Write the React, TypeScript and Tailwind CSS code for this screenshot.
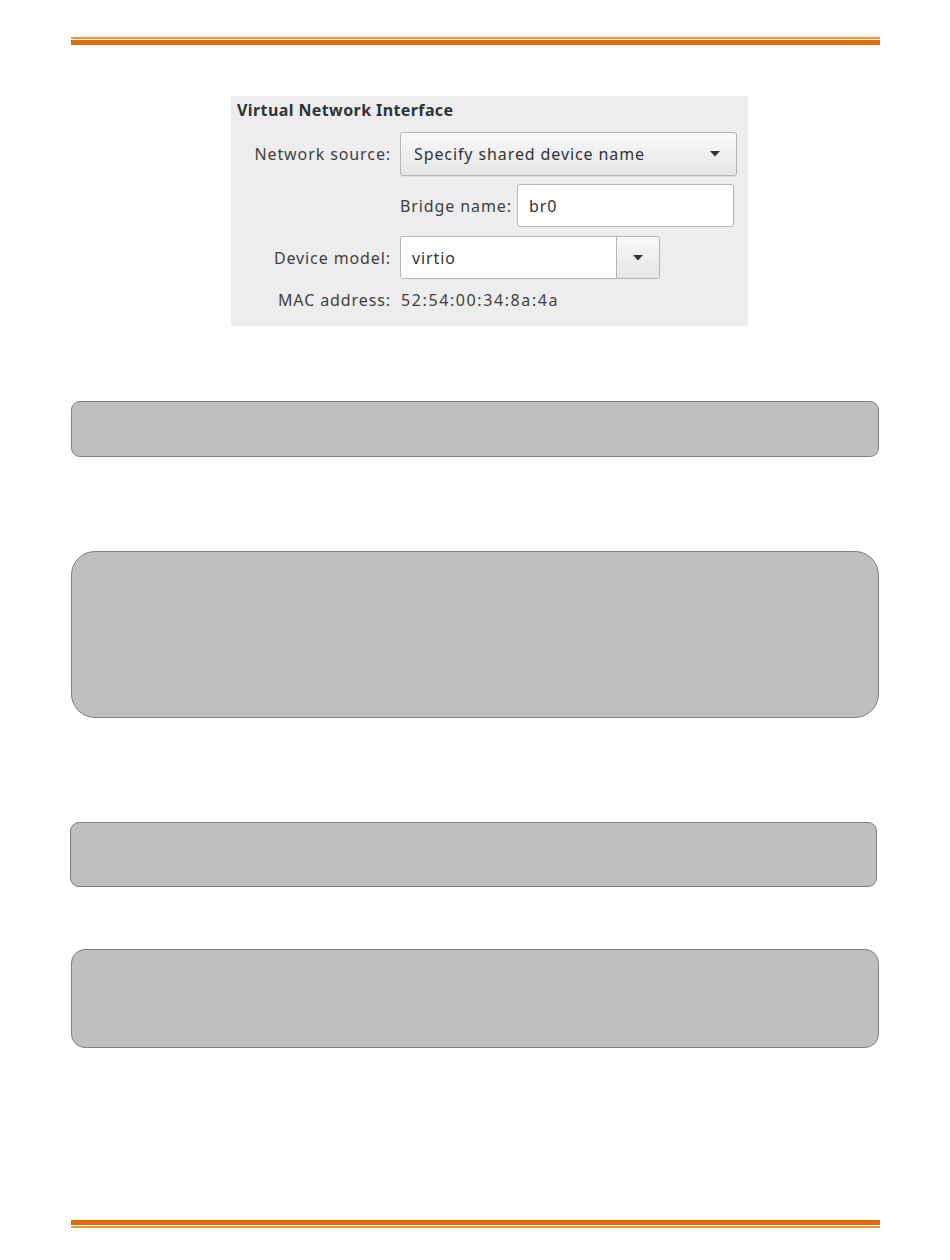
import React from 'react';

const font = { fontFamily: '"Noto Sans", "Open Sans", "DejaVu Sans", sans-serif' };

function Arrow() {
    return (
        <svg width="10" height="6" viewBox="0 0 10 6">
            <polygon points="0,0 10,0 5,5.5" fill="#2e3436" />
        </svg>
    );
}

// Orange rule pair used at top and bottom of the page
function Rule({ flipped }: { flipped?: boolean }) {
    const light = <div className="h-[2px] bg-[#f29340]" />;
    const dark = <div className="h-[5px] bg-[#e36c09]" />;
    return (
        <div className="ml-[71px] w-[809px] flex flex-col gap-[1px]">
            {flipped ? dark : light}
            {flipped ? light : dark}
        </div>
    );
}

function NicPanel() {
    return (
        <div
            className="ml-[231px] mt-[51px] w-[517px] h-[230px] bg-[#ededed] flex flex-col text-[16px] tracking-[0.9px] text-[#3d4041]"
            style={font}
        >
            {/* Title */}
            <div className="h-[28px] pl-[6px] flex items-center font-bold text-[#2e3436] tracking-[0.4px] whitespace-nowrap">
                Virtual Network Interface
            </div>

            {/* Network source */}
            <div className="mt-[8px] h-[44px] flex items-center">
                <div className="w-[160px] text-right whitespace-nowrap">Network source:</div>
                <div className="ml-[9px] w-[337px] h-[44px] rounded-[3px] border border-[#b4b4b4] bg-gradient-to-b from-[#f8f8f8] to-[#e6e6e6] flex items-center pl-[13px] pr-[16px] shadow-[0_1px_0_rgba(0,0,0,0.05)]">
                    <span className="flex-1 text-[#2e3436] whitespace-nowrap">Specify shared device name</span>
                    <Arrow />
                </div>
            </div>

            {/* Bridge name */}
            <div className="mt-[8px] h-[43px] flex items-center pl-[169px]">
                <div className="w-[108px] whitespace-nowrap">Bridge name:</div>
                <div className="ml-[9px] w-[217px] h-[43px] rounded-[3px] border border-[#b4b4b4] bg-white flex items-center pl-[11px] text-[#2e3436]">
                    br0
                </div>
            </div>

            {/* Device model */}
            <div className="mt-[9px] h-[43px] flex items-center">
                <div className="w-[160px] text-right whitespace-nowrap">Device model:</div>
                <div className="ml-[9px] w-[260px] h-[43px] rounded-[3px] border border-[#b4b4b4] flex overflow-hidden">
                    <div className="w-[216px] bg-white flex items-center pl-[11px] text-[#2e3436] border-r border-[#b4b4b4]">
                        virtio
                    </div>
                    <div className="flex-1 bg-gradient-to-b from-[#f8f8f8] to-[#e6e6e6] flex items-center justify-center">
                        <Arrow />
                    </div>
                </div>
            </div>

            {/* MAC */}
            <div className="mt-[10px] h-[22px] flex items-center">
                <div className="w-[160px] text-right whitespace-nowrap">MAC address:</div>
                <div className="ml-[10px] tracking-[1.6px] whitespace-nowrap">52:54:00:34:8a:4a</div>
            </div>
        </div>
    );
}

export default function App() {
    return (
        <div className="w-[950px] h-[1260px] bg-white pt-[37px] flex flex-col">
            <Rule />
            <NicPanel />

            <div className="ml-[71px] mt-[75px] w-[808px] h-[56px] rounded-[9px] border border-[#808080] bg-[#bfbfbf]" />
            <div className="ml-[71px] mt-[94px] w-[808px] h-[167px] rounded-[24px] border border-[#808080] bg-[#bfbfbf]" />
            <div className="ml-[70px] mt-[104px] w-[807px] h-[65px] rounded-[9px] border border-[#808080] bg-[#bfbfbf]" />
            <div className="ml-[71px] mt-[62px] w-[808px] h-[99px] rounded-[14px] border border-[#808080] bg-[#bfbfbf]" />

            <div className="mt-[172px]">
                <Rule flipped />
            </div>
        </div>
    );
}
